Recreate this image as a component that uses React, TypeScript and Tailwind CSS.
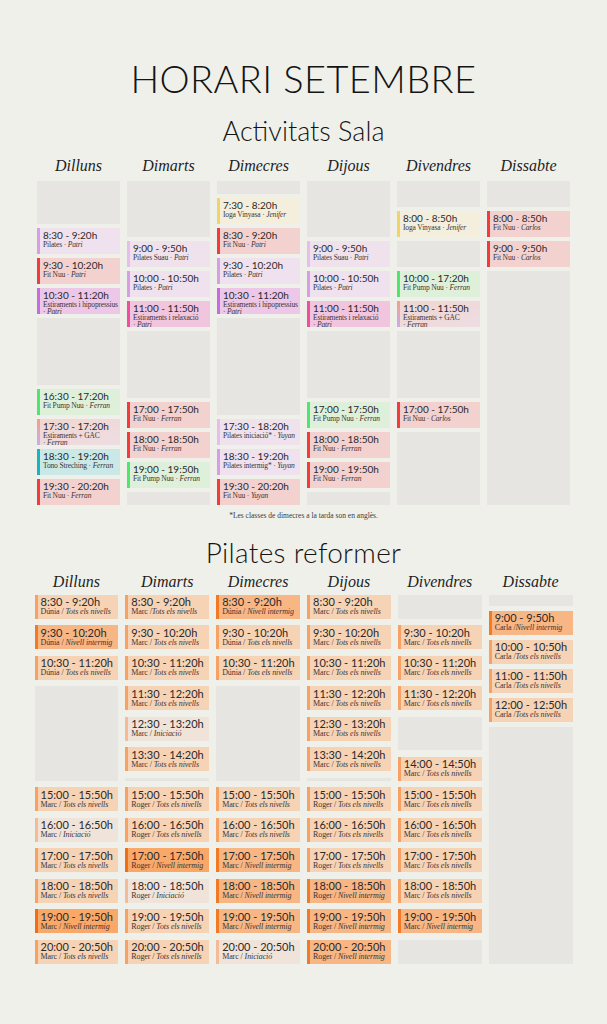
import React from 'react';

type Sala = { time: string; name: string; who: string; c: string; br?: boolean } | { grey: number };
type Pil = { time: string; who: string; level: string; lvl: 'T' | 'N' | 'S' | 'I'; slash?: string } | { grey: number };

const SALA_COLORS: Record<string, { bg: string; bar: string }> = {
  pilates: { bg: 'bg-[#efe1ed]', bar: 'bg-[#d69ee6]' },
  suau: { bg: 'bg-[#efe2ed]', bar: 'bg-[#e6bdeb]' },
  fit: { bg: 'bg-[#f3d1cf]', bar: 'bg-[#f43b3b]' },
  hipo: { bg: 'bg-[#ecc7e8]', bar: 'bg-[#c56ce0]' },
  relax: { bg: 'bg-[#f2c5df]', bar: 'bg-[#f24e9d]' },
  ioga: { bg: 'bg-[#f3efdc]', bar: 'bg-[#f0d46a]' },
  pump: { bg: 'bg-[#dff0da]', bar: 'bg-[#4ee66c]' },
  gac: { bg: 'bg-gradient-to-br from-[#f2d6d0] to-[#ecdde3]', bar: 'bg-gradient-to-b from-[#f2a083] to-[#c7aaf0]' },
  tono: { bg: 'bg-[#c9e8e6]', bar: 'bg-[#17b5c2]' },
};

const PIL_COLORS = {
  T: { bg: 'bg-[#f7d3b5]', bar: 'bg-[#f8a165]' },
  N: { bg: 'bg-[#f8b684]', bar: 'bg-[#f37a25]' },
  S: { bg: 'bg-[#faa867]', bar: 'bg-[#f06e18]' },
  I: { bg: 'bg-[#f0e3d9]', bar: 'bg-[#f4bb96]' },
};

const salaDays: { day: string; items: Sala[] }[] = [
  {
    day: 'Dilluns',
    items: [
      { grey: 43 },
      { time: '8:30 - 9:20h', name: 'Pilates', who: 'Patri', c: 'pilates' },
      { time: '9:30 - 10:20h', name: 'Fit Nuu', who: 'Patri', c: 'fit' },
      { time: '10:30 - 11:20h', name: 'Estiraments i hipopressius', who: 'Patri', c: 'hipo', br: true },
      { grey: 67 },
      { time: '16:30 - 17:20h', name: 'Fit Pump Nuu', who: 'Ferran', c: 'pump' },
      { time: '17:30 - 17:20h', name: 'Estiraments + GAC', who: 'Ferran', c: 'gac', br: true },
      { time: '18:30 - 19:20h', name: 'Tono Streching', who: 'Ferran', c: 'tono' },
      { time: '19:30 - 20:20h', name: 'Fit Nuu', who: 'Ferran', c: 'fit' },
    ],
  },
  {
    day: 'Dimarts',
    items: [
      { grey: 56 },
      { time: '9:00 - 9:50h', name: 'Pilates Suau', who: 'Patri', c: 'suau' },
      { time: '10:00 - 10:50h', name: 'Pilates', who: 'Patri', c: 'pilates' },
      { time: '11:00 - 11:50h', name: 'Estiraments i relaxació', who: 'Patri', c: 'relax', br: true },
      { grey: 67 },
      { time: '17:00 - 17:50h', name: 'Fit Nuu', who: 'Ferran', c: 'fit' },
      { time: '18:00 - 18:50h', name: 'Fit Nuu', who: 'Ferran', c: 'fit' },
      { time: '19:00 - 19:50h', name: 'Fit Pump Nuu', who: 'Ferran', c: 'pump' },
      { grey: 13 },
    ],
  },
  {
    day: 'Dimecres',
    items: [
      { grey: 13 },
      { time: '7:30 - 8:20h', name: 'Ioga Vinyasa', who: 'Jenifer', c: 'ioga' },
      { time: '8:30 - 9:20h', name: 'Fit Nuu', who: 'Patri', c: 'fit' },
      { time: '9:30 - 10:20h', name: 'Pilates', who: 'Patri', c: 'pilates' },
      { time: '10:30 - 11:20h', name: 'Estiraments i hipopressius', who: 'Patri', c: 'hipo', br: true },
      { grey: 97 },
      { time: '17:30 - 18:20h', name: 'Pilates iniciació*', who: 'Yuyan', c: 'suau' },
      { time: '18:30 - 19:20h', name: 'Pilates intermig*', who: 'Yuyan', c: 'pilates' },
      { time: '19:30 - 20:20h', name: 'Fit Nuu', who: 'Yuyan', c: 'fit' },
    ],
  },
  {
    day: 'Dijous',
    items: [
      { grey: 56 },
      { time: '9:00 - 9:50h', name: 'Pilates Suau', who: 'Patri', c: 'suau' },
      { time: '10:00 - 10:50h', name: 'Pilates', who: 'Patri', c: 'pilates' },
      { time: '11:00 - 11:50h', name: 'Estiraments i relaxació', who: 'Patri', c: 'relax', br: true },
      { grey: 67 },
      { time: '17:00 - 17:50h', name: 'Fit Pump Nuu', who: 'Ferran', c: 'pump' },
      { time: '18:00 - 18:50h', name: 'Fit Nuu', who: 'Ferran', c: 'fit' },
      { time: '19:00 - 19:50h', name: 'Fit Nuu', who: 'Ferran', c: 'fit' },
      { grey: 13 },
    ],
  },
  {
    day: 'Divendres',
    items: [
      { grey: 26 },
      { time: '8:00 - 8:50h', name: 'Ioga Vinyasa', who: 'Jenifer', c: 'ioga' },
      { grey: 26 },
      { time: '10:00 - 17:20h', name: 'Fit Pump Nuu', who: 'Ferran', c: 'pump' },
      { time: '11:00 - 11:50h', name: 'Estiraments + GAC', who: 'Ferran', c: 'gac', br: true },
      { grey: 67 },
      { time: '17:00 - 17:50h', name: 'Fit Nuu', who: 'Carlos', c: 'fit' },
      { grey: 73 },
    ],
  },
  {
    day: 'Dissabte',
    items: [
      { grey: 26 },
      { time: '8:00 - 8:50h', name: 'Fit Nuu', who: 'Carlos', c: 'fit' },
      { time: '9:00 - 9:50h', name: 'Fit Nuu', who: 'Carlos', c: 'fit' },
      { grey: 234 },
    ],
  },
];

const T = 'Tots els nivells';
const N = 'Nivell intermig';
const I = 'Iniciació';

const pilDays: { day: string; gap: string; items: Pil[] }[] = [
  {
    day: 'Dilluns',
    gap: 'gap-[6.5px]',
    items: [
      { time: '8:30 - 9:20h', who: 'Dúnia', level: T, lvl: 'T' },
      { time: '9:30 - 10:20h', who: 'Dúnia', level: N, lvl: 'N' },
      { time: '10:30 - 11:20h', who: 'Dúnia', level: T, lvl: 'T' },
      { grey: 94.5 },
      { time: '15:00 - 15:50h', who: 'Marc', level: T, lvl: 'T' },
      { time: '16:00 - 16:50h', who: 'Marc', level: I, lvl: 'I' },
      { time: '17:00 - 17:50h', who: 'Marc', level: T, lvl: 'T' },
      { time: '18:00 - 18:50h', who: 'Marc', level: T, lvl: 'T' },
      { time: '19:00 - 19:50h', who: 'Marc', level: N, lvl: 'S' },
      { time: '20:00 - 20:50h', who: 'Marc', level: T, lvl: 'T' },
    ],
  },
  {
    day: 'Dimarts',
    gap: 'gap-[6.5px]',
    items: [
      { time: '8:30 - 9:20h', who: 'Marc', level: T, lvl: 'T', slash: ' /' },
      { time: '9:30 - 10:20h', who: 'Marc', level: T, lvl: 'T' },
      { time: '10:30 - 11:20h', who: 'Marc', level: T, lvl: 'T' },
      { time: '11:30 - 12:20h', who: 'Marc', level: T, lvl: 'T' },
      { time: '12:30 - 13:20h', who: 'Marc', level: I, lvl: 'I' },
      { time: '13:30 - 14:20h', who: 'Marc', level: T, lvl: 'T' },
      { grey: 3 },
      { time: '15:00 - 15:50h', who: 'Roger', level: T, lvl: 'T' },
      { time: '16:00 - 16:50h', who: 'Roger', level: T, lvl: 'T' },
      { time: '17:00 - 17:50h', who: 'Roger', level: N, lvl: 'S' },
      { time: '18:00 - 18:50h', who: 'Roger', level: I, lvl: 'I' },
      { time: '19:00 - 19:50h', who: 'Roger', level: T, lvl: 'T' },
      { time: '20:00 - 20:50h', who: 'Roger', level: T, lvl: 'T' },
    ],
  },
  {
    day: 'Dimecres',
    gap: 'gap-[6.5px]',
    items: [
      { time: '8:30 - 9:20h', who: 'Dúnia', level: N, lvl: 'N' },
      { time: '9:30 - 10:20h', who: 'Dúnia', level: T, lvl: 'T' },
      { time: '10:30 - 11:20h', who: 'Dúnia', level: T, lvl: 'T' },
      { grey: 94.5 },
      { time: '15:00 - 15:50h', who: 'Marc', level: T, lvl: 'T' },
      { time: '16:00 - 16:50h', who: 'Marc', level: T, lvl: 'T' },
      { time: '17:00 - 17:50h', who: 'Marc', level: N, lvl: 'N' },
      { time: '18:00 - 18:50h', who: 'Marc', level: N, lvl: 'N' },
      { time: '19:00 - 19:50h', who: 'Marc', level: N, lvl: 'N' },
      { time: '20:00 - 20:50h', who: 'Marc', level: I, lvl: 'I' },
    ],
  },
  {
    day: 'Dijous',
    gap: 'gap-[6.5px]',
    items: [
      { time: '8:30 - 9:20h', who: 'Marc', level: T, lvl: 'T' },
      { time: '9:30 - 10:20h', who: 'Marc', level: T, lvl: 'T' },
      { time: '10:30 - 11:20h', who: 'Marc', level: T, lvl: 'T' },
      { time: '11:30 - 12:20h', who: 'Marc', level: T, lvl: 'T' },
      { time: '12:30 - 13:20h', who: 'Marc', level: T, lvl: 'T' },
      { time: '13:30 - 14:20h', who: 'Marc', level: T, lvl: 'T' },
      { grey: 3 },
      { time: '15:00 - 15:50h', who: 'Roger', level: T, lvl: 'T' },
      { time: '16:00 - 16:50h', who: 'Roger', level: T, lvl: 'T' },
      { time: '17:00 - 17:50h', who: 'Roger', level: T, lvl: 'T' },
      { time: '18:00 - 18:50h', who: 'Roger', level: N, lvl: 'N' },
      { time: '19:00 - 19:50h', who: 'Roger', level: N, lvl: 'N' },
      { time: '20:00 - 20:50h', who: 'Roger', level: N, lvl: 'N' },
    ],
  },
  {
    day: 'Divendres',
    gap: 'gap-[6.5px]',
    items: [
      { grey: 24 },
      { time: '9:30 - 10:20h', who: 'Marc', level: T, lvl: 'T' },
      { time: '10:30 - 11:20h', who: 'Marc', level: T, lvl: 'T' },
      { time: '11:30 - 12:20h', who: 'Marc', level: T, lvl: 'T' },
      { grey: 33.5 },
      { time: '14:00 - 14:50h', who: 'Marc', level: T, lvl: 'T' },
      { time: '15:00 - 15:50h', who: 'Marc', level: T, lvl: 'T' },
      { time: '16:00 - 16:50h', who: 'Marc', level: T, lvl: 'T' },
      { time: '17:00 - 17:50h', who: 'Marc', level: T, lvl: 'T' },
      { time: '18:00 - 18:50h', who: 'Marc', level: T, lvl: 'T' },
      { time: '19:00 - 19:50h', who: 'Marc', level: N, lvl: 'N' },
      { grey: 24 },
    ],
  },
  {
    day: 'Dissabte',
    gap: 'gap-[5px]',
    items: [
      { grey: 11 },
      { time: '9:00 - 9:50h', who: 'Carla', level: N, lvl: 'N', slash: ' /' },
      { time: '10:00 - 10:50h', who: 'Carla', level: T, lvl: 'T', slash: ' /' },
      { time: '11:00 - 11:50h', who: 'Carla', level: T, lvl: 'T', slash: ' /' },
      { time: '12:00 - 12:50h', who: 'Carla', level: T, lvl: 'T', slash: ' /' },
      { grey: 237 },
    ],
  },
];

const sans = "font-['Lato',sans-serif]";
const serif = "font-['Liberation_Serif',serif]";

function SalaBlock({ item }: { item: Sala }) {
  if ('grey' in item) {
    return <div className="shrink-0 bg-[#e6e5e1]" style={{ height: item.grey }} />;
  }
  const col = SALA_COLORS[item.c];
  return (
    <div className={`flex h-[26px] shrink-0 ${col.bg}`}>
      <div className={`w-[3px] shrink-0 ${col.bar}`} />
      <div className="min-w-0 pl-[3px] pt-[1.5px]">
        <div className={`${sans} whitespace-nowrap text-[10px] leading-[11px] text-[#2a2a2a]`}>{item.time}</div>
        <div className={`${serif} whitespace-nowrap text-[7.5px] leading-[7px] tracking-[-0.15px] text-[#3b3535]`}>
          {item.name}
          {item.br ? <br /> : ' '}· <i>{item.who}</i>
        </div>
      </div>
    </div>
  );
}

function PilBlock({ item }: { item: Pil }) {
  if ('grey' in item) {
    return <div className="shrink-0 bg-[#e6e5e1]" style={{ height: item.grey }} />;
  }
  const col = PIL_COLORS[item.lvl];
  return (
    <div className={`flex h-[24px] shrink-0 ${col.bg}`}>
      <div className={`w-[3px] shrink-0 ${col.bar}`} />
      <div className="min-w-0 pl-[3px] pt-[1.5px]">
        <div className={`${sans} whitespace-nowrap text-[11px] leading-[11px] text-[#2a2a2a]`}>{item.time}</div>
        <div className={`${serif} whitespace-nowrap text-[8px] leading-[9px] tracking-[-0.1px] text-[#3b3535]`}>
          {item.who}
          {item.slash ?? ' / '}
          <i>{item.level}</i>
        </div>
      </div>
    </div>
  );
}

export default function App() {
  return (
    <div className="min-h-[1024px] w-full bg-[#f0f0eb] pt-[59px] text-[#141414]">
      <h1 className={`${sans} text-center text-[38px] font-light leading-none tracking-[0.4px]`}>HORARI SETEMBRE</h1>

      <h2 className={`${sans} mt-[20px] text-center text-[27px] font-light leading-none`}>Activitats Sala</h2>

      <div className="mx-auto mt-[14px] grid w-[533px] grid-cols-6 gap-x-[7px]">
        {salaDays.map((d) => (
          <div key={d.day} className={`${serif} text-center text-[16px] italic leading-none text-[#1e1e1e]`}>
            {d.day}
          </div>
        ))}
      </div>

      <div className="mx-auto mt-[7px] grid w-[533px] grid-cols-6 gap-x-[7px]">
        {salaDays.map((d) => (
          <div key={d.day} className="flex flex-col gap-[4px]">
            {d.items.map((it, i) => (
              <SalaBlock key={i} item={it} />
            ))}
          </div>
        ))}
      </div>

      <p className={`${serif} mt-[7px] text-center text-[7.5px] leading-none text-[#3a3a3a]`}>
        *Les classes de dimecres a la tarda son en anglès.
      </p>

      <h2 className={`${sans} mt-[18px] text-center text-[28px] font-light leading-none tracking-[0.3px]`}>Pilates reformer</h2>

      <div className="mx-auto mt-[8px] grid w-[538px] grid-cols-6 gap-x-[7px]">
        {pilDays.map((d) => (
          <div key={d.day} className={`${serif} text-center text-[16px] italic leading-none text-[#1e1e1e]`}>
            {d.day}
          </div>
        ))}
      </div>

      <div className="mx-auto mt-[5px] grid w-[538px] grid-cols-6 gap-x-[7px]">
        {pilDays.map((d) => (
          <div key={d.day} className={`flex flex-col ${d.gap}`}>
            {d.items.map((it, i) => (
              <PilBlock key={i} item={it} />
            ))}
          </div>
        ))}
      </div>
    </div>
  );
}
